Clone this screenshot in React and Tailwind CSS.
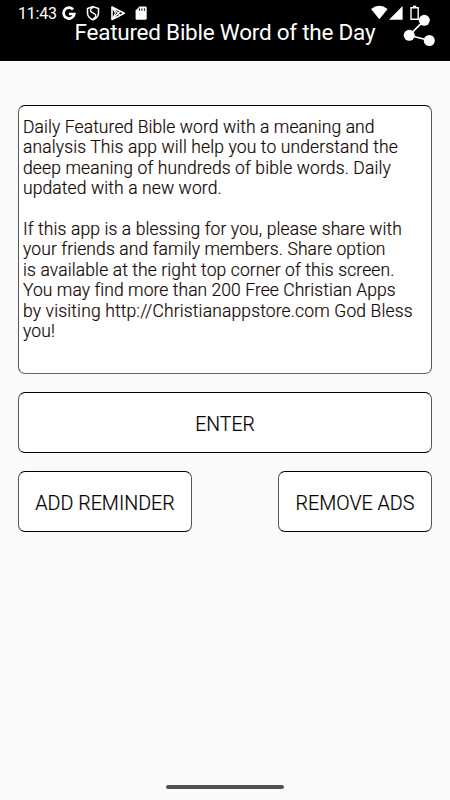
import React from "react";

const INTRO_LINES = [
  ["Daily Featured Bible word with a meaning and", "tracking-[0.085px]"],
  ["analysis This app will help you to understand the", "tracking-[0.115px]"],
  ["deep meaning of hundreds of bible words. Daily", "tracking-[0.125px]"],
  ["updated with a new word.", "tracking-[0.11px]"],
  ["", ""],
  ["If this app is a blessing for you, please share with", "tracking-[0.11px]"],
  ["your friends and family members. Share option", "tracking-[0.1px]"],
  ["is available at the right top corner of this screen.", "tracking-[0.115px]"],
  ["You may find more than 200 Free Christian Apps", "tracking-[0.06px]"],
  ["by visiting http://Christianappstore.com God Bless", "tracking-[0.14px]"],
  ["you!", "tracking-[0.1px]"],
];

function StatusBar() {
  return (
    <div className="pointer-events-none absolute inset-x-0 top-0 flex h-[26px] items-center pl-[18px] text-white">
      <span className="w-[43px] whitespace-nowrap pt-[1px] text-[16px] leading-[26px] tracking-[-0.2px]">11:43</span>
      <svg className="h-[26px] w-[90px] shrink-0" viewBox="61 0 90 26" fill="none">
        <path d="M73 9.5A5.4 5.4 0 1 0 74.3 14H69" stroke="white" strokeWidth="2.7" />
        <path d="M93 6.6L98.5 8.6V13C98.5 16.2 95.8 18.7 93 19.7C90.2 18.7 87.5 16.2 87.5 13V8.6Z" stroke="white" strokeWidth="1.5" />
        <path d="M93.6 7L90.6 9.3V11.4L95.6 14.6V16.8L93 19.3" stroke="white" strokeWidth="1.3" />
        <path d="M112 7L124.3 13.2L112 19.5Z" stroke="white" strokeWidth="1.6" strokeLinejoin="round" />
        <path d="M112 7L120.4 15.5M112 19.5L120.4 11M112 7L115.5 13.2L112 19.5" stroke="white" strokeWidth="1.2" />
        <path d="M139.5 6.6H145.3Q146.7 6.6 146.7 8V18.4Q146.7 19.8 145.3 19.8H137Q135.6 19.8 135.6 18.4V10.5Z" fill="white" />
        <path d="M139.4 8.4V10.8M141.9 8.4V10.8M144.4 8.4V10.8" stroke="black" strokeWidth="1" />
      </svg>
      <svg className="ml-auto h-[26px] w-[80px] shrink-0" viewBox="370 0 80 26" fill="none">
        <path d="M371 9Q379.3 2.5 387.6 9L379.3 19.3Z" fill="white" />
        <path d="M402.6 6V19.7H389Z" fill="white" />
        <path d="M411 7.7H418.2V19.2H411Z" stroke="white" strokeWidth="1.4" />
        <path d="M413 6.3H416.2" stroke="white" strokeWidth="1.4" />
      </svg>
    </div>
  );
}

function ActionButton({ className, children }) {
  return (
    <button
      className={`flex h-[61px] items-center justify-center rounded-[7px] border border-black border-x-[#555] bg-white font-light text-black [-webkit-text-stroke:0.2px_black] ${className}`}
    >
      <span className="whitespace-nowrap pt-[5px]">{children}</span>
    </button>
  );
}

export default function App() {
  return (
    <div className="relative flex h-[800px] w-[450px] flex-col overflow-hidden bg-[#fafafa] font-['Roboto',sans-serif]">
      <header className="flex h-[61px] shrink-0 bg-black text-white">
        <h1 className="ml-[74.5px] w-[328.5px] whitespace-nowrap pt-[18px] text-[22.5px] font-normal leading-[28px] tracking-[-0.24px]">
          Featured Bible Word of the Day
        </h1>
        <button aria-label="Share" className="h-[61px] w-[34px]">
          <svg className="h-[61px] w-[34px]" viewBox="403 0 34 61" fill="white">
            <path d="M424.3 20.3L409.2 35.3L429.3 40.5" fill="none" stroke="white" strokeWidth="1.7" />
            <circle cx="424.3" cy="20.3" r="5.5" />
            <circle cx="409.2" cy="35.3" r="5.5" />
            <circle cx="429.3" cy="40.5" r="5.5" />
          </svg>
        </button>
      </header>
      <StatusBar />

      <main className="flex flex-1 flex-col gap-[18px] px-[18px] pt-[44px]">
        <section className="h-[269px] rounded-[7px] border border-black border-x-[#555] border-b-[#666] bg-white pl-[4px] pt-[11px] text-[17.5px] font-light leading-[20.4px] text-[#180b06] [-webkit-text-stroke:0.2px_#180b06]">
          {INTRO_LINES.map(([line, tracking], index) => (
            <p key={index} className={`h-[20.4px] whitespace-nowrap ${tracking}`}>
              {line}
            </p>
          ))}
        </section>
        <ActionButton className="w-full text-[19.4px]">ENTER</ActionButton>
        <div className="flex justify-between">
          <ActionButton className="w-[174px] text-[19.7px]">ADD REMINDER</ActionButton>
          <ActionButton className="w-[154px] text-[19.7px]">REMOVE ADS</ActionButton>
        </div>
      </main>

      <div className="mb-[11px] h-[4px] w-[118px] shrink-0 self-center rounded-full bg-[#50524f]" />
    </div>
  );
}
